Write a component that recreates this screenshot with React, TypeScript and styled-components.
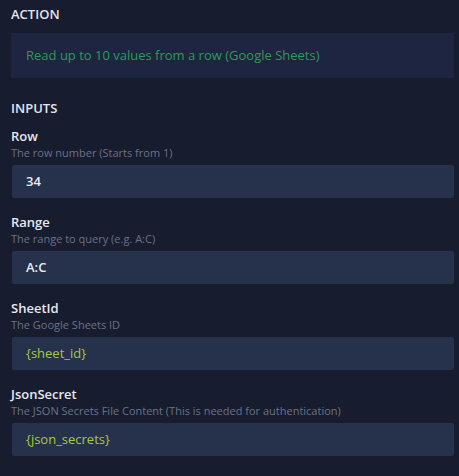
import styled, { createGlobalStyle } from "styled-components";

const GlobalStyle = createGlobalStyle`
  body{
    margin: 0;
    background-color: #171c2e;
    font-family: "Open Sans", "Liberation Sans", sans-serif;
  }
`
const Panel = styled.div`
  padding: 5px 5px 20px 11px;
  background-color: #171c2e;
`
const Heading = styled.div`
  font-size: 13px;
  line-height: 18px;
  font-weight: 600;
  color: #e2e5ec;
  text-transform: uppercase;
`
const ActionBox = styled.div`
  margin: 10px 0 21px;
  height: 45px;
  line-height: 45px;
  padding: 0 15px;
  background-color: #1e2540;
  color: #2a9b58;
  font-size: 13px;
`
const Field = styled.div`
  margin-top: 10px;
  & + & {
    margin-top: 15px;
  }
`
const Label = styled.div`
  font-size: 13px;
  line-height: 18px;
  font-weight: 600;
  color: #e6e8ee;
`
const Hint = styled.div`
  font-size: 11px;
  line-height: 16px;
  color: #6b7287;
`
const Value = styled.div<{ $variable?: boolean }>`
  margin: 4px 0 0 1px;
  height: 33px;
  line-height: 33px;
  padding: 0 14px;
  border-radius: 2px;
  background-color: #26314b;
  font-size: 13px;
  font-weight: ${p => (p.$variable ? 400 : 600)};
  color: ${p => (p.$variable ? "#a9c93b" : "#e8eaf0")};
`

const inputs = [
  { name: "Row", hint: "The row number (Starts from 1)", value: "34" },
  { name: "Range", hint: "The range to query (e.g. A:C)", value: "A:C" },
  { name: "SheetId", hint: "The Google Sheets ID", value: "{sheet_id}" },
  {
    name: "JsonSecret",
    hint: "The JSON Secrets File Content (This is needed for authentication)",
    value: "{json_secrets}",
  },
];

function App() {
  return (
    <>
      <GlobalStyle />
      <Panel>
        <Heading>Action</Heading>
        <ActionBox>Read up to 10 values from a row (Google Sheets)</ActionBox>
        <Heading>Inputs</Heading>
        {inputs.map(input =>
          <Field key={input.name}>
            <Label>{input.name}</Label>
            <Hint>{input.hint}</Hint>
            <Value $variable={input.value.startsWith("{")}>{input.value}</Value>
          </Field>
        )}
      </Panel>
    </>
  );
}
export default App;
